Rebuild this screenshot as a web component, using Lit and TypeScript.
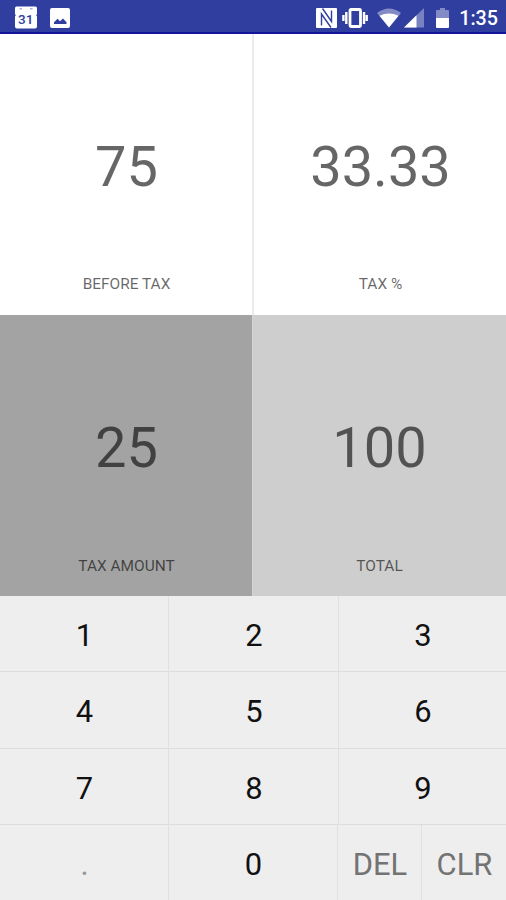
import { LitElement, html, css } from "lit";
import { customElement, property } from "lit/decorators.js";

@customElement("status-bar")
class StatusBar extends LitElement {
  static styles = css`
    :host {
      display: flex;
      align-items: center;
      box-sizing: border-box;
      height: 34px;
      padding: 3px 8px 0 14px;
      background: #303f9f;
      border-bottom: 2px solid #14149a;
      color: #fff;
    }
    svg { display: block; flex: none; }
    .photo { margin-left: 12px; }
    .spacer { flex: 1; }
    .vibrate { margin-left: 5px; }
    .wifi { margin-left: 9px; }
    .cell { margin-left: 3px; }
    .battery { margin-left: 12px; }
    .clock {
      margin-left: 10px;
      padding-top: 2px;
      font: 500 19.7px/28px Roboto, sans-serif;
    }
  `;
  render() {
    return html`
      <svg width="24" height="24" viewBox="0 0 24 24">
        <path fill="#fff" d="M2.500 .5h19Q23 .5 23 2V8l-.8 1.200L23 10.500v10q0 2-2 2H3q-2 0-2-2v-10l.8-1.300L1 8V2Q1 .5 2.500 .5z"/>
        <path fill="#303f9f" fill-opacity=".4" d="M5.500 2h2.500v1.500H5.500zM16 2h2.500v1.500H16z"/>
        <text x="11.700" y="18" text-anchor="middle" font-family="Roboto, sans-serif" font-size="13.500" font-weight="500" fill="#303f9f">31</text>
      </svg>
      <svg class="photo" width="20" height="20" viewBox="0 0 20 20">
        <rect width="20" height="20" rx="2" fill="#fff"/>
        <path fill="#303f9f" d="M4 16v-1.800L7.500 10.800l2.500 2.500L13 10.500l3.500 3.700V16z"/>
      </svg>
      <div class="spacer"></div>
      <svg width="21" height="20" viewBox="0 0 21 20">
        <rect width="21" height="20" rx="1" fill="#fff"/>
        <path fill="none" stroke="#303f9f" stroke-width="1.400" d="M5.500 17.500V6L15 19.500"/>
        <path fill="none" stroke="#303f9f" stroke-width="1.400" d="M6.500 .5L15.500 13.500V2.500"/>
      </svg>
      <svg class="vibrate" width="26" height="20" viewBox="0 0 26 20">
        <rect x="8" y="1.500" width="10.500" height="17" rx="1" fill="none" stroke="#fff" stroke-width="2.800"/>
        <path fill="none" stroke="#fff" stroke-width="2.400" d="M4.300 4v12M22 4v12M1.400 7v6M24.700 7v6"/>
      </svg>
      <svg class="wifi" width="24" height="20" viewBox="0 0 24 20">
        <path fill="#fff" fill-opacity=".4" d="M0 5Q12-4 24 5L12 19.500z"/>
        <path fill="#fff" d="M2.500 7.800Q12 3 21.500 7.800L12 19.500z"/>
      </svg>
      <svg class="cell" width="20" height="20" viewBox="0 0 20 20">
        <path fill="#fff" fill-opacity=".35" d="M0 19.500L20 0V19.500z"/>
        <path fill="#fff" d="M0 19.500L12.500 7.300V19.500z"/>
      </svg>
      <svg class="battery" width="13" height="20" viewBox="0 0 13 20">
        <path fill="#fff" fill-opacity=".4" d="M0 3q0-1 1-1h3V0h5v2h3q1 0 1 1v7H0z"/>
        <path fill="#fff" d="M0 10h13v9q0 1-1 1H1q-1 0-1-1z"/>
      </svg>
      <span class="clock">1:35</span>
    `;
  }
}

@customElement("value-tile")
class ValueTile extends LitElement {
  @property() value = "";
  @property() label = "";
  static styles = css`
    :host {
      display: flex;
      flex-direction: column;
      align-items: center;
      justify-content: space-between;
      box-sizing: border-box;
      padding: 100px 0 20px 1px;
      font-family: Roboto, sans-serif;
      color: rgba(0, 0, 0, 0.6);
    }
    .value { font-size: 56px; line-height: 66px; }
    .label { font-size: 15.45px; line-height: 22px; }
  `;
  render() {
    return html`<div class="value">${this.value}</div><div class="label">${this.label}</div>`;
  }
}

@customElement("app-root")
class AppRoot extends LitElement {
  static styles = css`
    :host {
      display: flex;
      flex-direction: column;
      height: 900px;
      overflow: hidden;
      background: #eee;
      font-family: Roboto, sans-serif;
    }
    .tiles {
      display: grid;
      grid-template: 281px 281px / 252px 254px;
    }
    .plain { background: #fff; }
    .rate { padding-left: 3px; }
    .ruled { border-right: 2px solid #ebebeb; margin-right: -2px; z-index: 1; }
    .amount { background: #a3a3a3; padding-bottom: 19px; }
    .total { background: #cecece; border-left: 1px solid #d3d3d3; padding: 100px 0 19px; }
    .keys {
      flex: 1;
      display: grid;
      grid-template-rows: 76px 77px 76px 75px;
    }
    .row { display: grid; grid-template-columns: 169px 170px 167px; }
    .last { grid-template-columns: 169px 169px 84px 84px; }
    .key {
      display: flex;
      align-items: center;
      justify-content: center;
      box-sizing: border-box;
      border-right: 1px solid #e0e0e0;
      border-bottom: 1px solid #dcdcdc;
      padding: 4px 0 0 1px;
      font-size: 30.9px;
      line-height: 36px;
      color: #111;
    }
    .key:last-child { border-right: 0; }
    .last .key { border-bottom: 0; }
    .muted { color: #737373; }
    .faint { color: #999; }
  `;
  render() {
    const rows = [["1", "2", "3"], ["4", "5", "6"], ["7", "8", "9"]];
    return html`
      <status-bar></status-bar>
      <div class="tiles">
        <value-tile class="plain ruled" value="75" label="BEFORE TAX"></value-tile>
        <value-tile class="plain rate" value="33.33" label="TAX %"></value-tile>
        <value-tile class="amount" value="25" label="TAX AMOUNT"></value-tile>
        <value-tile class="total" value="100" label="TOTAL"></value-tile>
      </div>
      <div class="keys">
        ${rows.map((r) => html`<div class="row">${r.map((k) => html`<div class="key">${k}</div>`)}</div>`)}
        <div class="row last">
          <div class="key faint">.</div>
          <div class="key">0</div>
          <div class="key muted">DEL</div>
          <div class="key muted">CLR</div>
        </div>
      </div>
    `;
  }
}
